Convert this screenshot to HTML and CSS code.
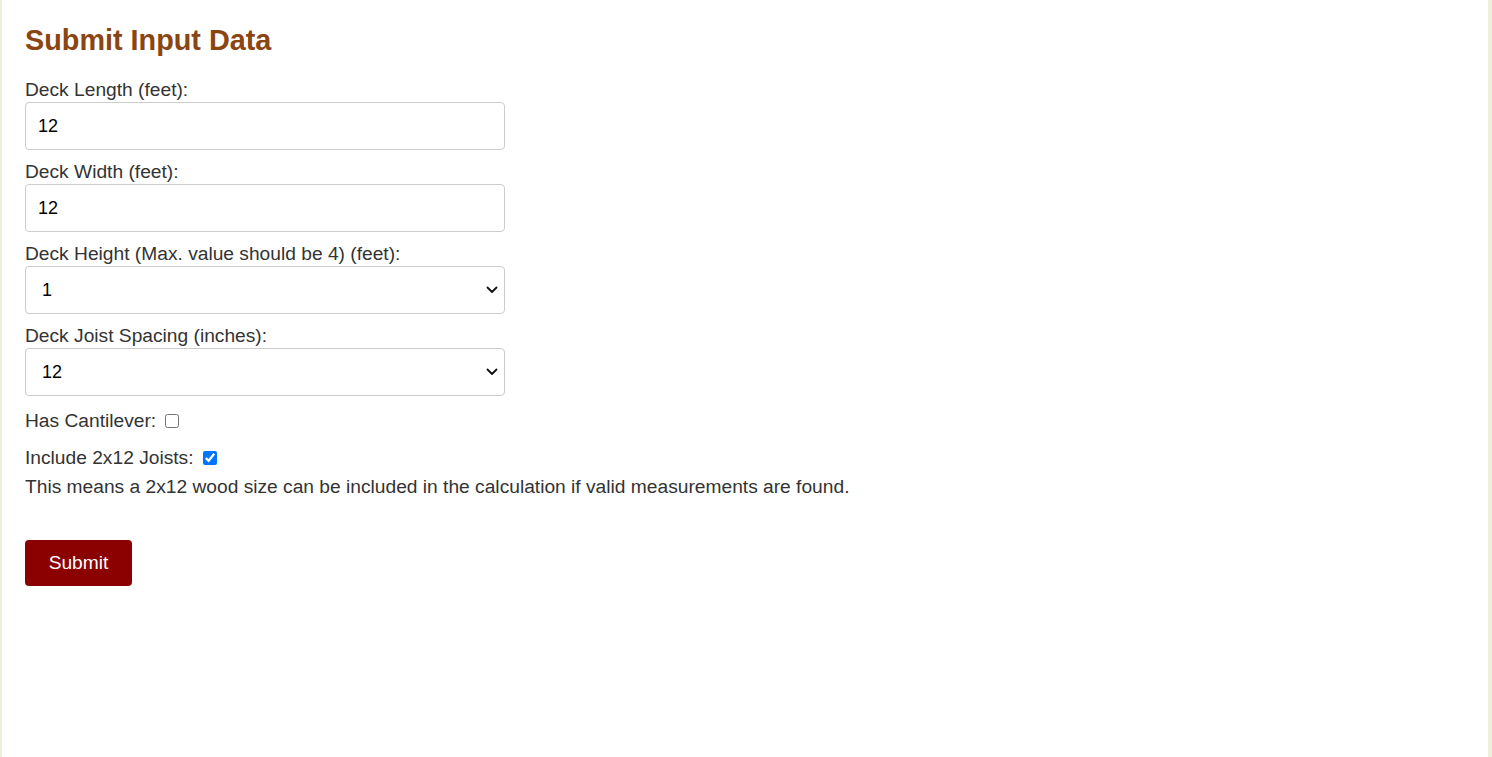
FILE: index.html
```html
<!DOCTYPE html>
<html lang="en">
<head>
  <meta charset="UTF-8" />
  <meta name="viewport" content="width=device-width, initial-scale=1.0" />
  <title>Deck Calculator</title>
  <link rel="stylesheet" href="styles.css">
</head>
<body>
  <div class="container">
    <h2>Submit Input Data</h2>

    <form id="deck-form" onsubmit="return false;">
      <div class="form-group">
        <label for="length">Deck Length (feet):</label>
        <input type="number" id="length" name="length" value="12">
      </div>

      <div class="form-group">
        <label for="width">Deck Width (feet):</label>
        <input type="number" id="width" name="width" value="12">
      </div>

      <div class="form-group">
        <label for="height">Deck Height (Max. value should be 4) (feet):</label>
        <div class="select-wrap">
          <select id="height" name="height">
            <option value="1" selected>1</option>
            <option value="2">2</option>
            <option value="3">3</option>
            <option value="4">4</option>
          </select>
          <svg class="chevron" viewBox="0 0 12 8" width="12" height="8"><path d="M1.5 1.5 L6 6 L10.5 1.5" /></svg>
        </div>
      </div>

      <div class="form-group">
        <label for="spacing">Deck Joist Spacing (inches):</label>
        <div class="select-wrap">
          <select id="spacing" name="spacing">
            <option value="12" selected>12</option>
            <option value="16">16</option>
            <option value="24">24</option>
          </select>
          <svg class="chevron" viewBox="0 0 12 8" width="12" height="8"><path d="M1.5 1.5 L6 6 L10.5 1.5" /></svg>
        </div>
      </div>

      <div class="check-row">
        <label for="cantilever">Has Cantilever:</label>
        <input type="checkbox" id="cantilever" name="cantilever">
      </div>

      <div class="check-row">
        <label for="joists">Include 2x12 Joists:</label>
        <input type="checkbox" id="joists" name="joists" checked>
      </div>
      <p class="hint">This means a 2x12 wood size can be included in the calculation if valid measurements are found.</p>

      <button type="submit" class="submit-btn">Submit</button>
    </form>
  </div>
</body>
</html>
```

FILE: styles.css
```css
/* Page frame */
html, body {
  height: 100%;
}
body {
  font-family: "Liberation Sans", Arial, sans-serif;
  font-size: 19.2px;
  background: #eef0dc;
  color: #333;
  margin: 0;
  padding: 0 4px 0 2px;
}
.container {
  background: #fff;
  min-height: 100%;
  box-sizing: border-box;
  padding: 24px 23px;
}
h2 {
  font-size: 28.8px;
  line-height: 32px;
  color: #8b4513;
  margin: 0 0 23px;
}
/* Form fields */
.form-group {
  margin-bottom: 11px;
}
.form-group label {
  display: block;
  line-height: 22px;
  margin-bottom: 1px;
}
.form-group input,
.form-group select {
  display: block;
  width: 480px;
  height: 48px;
  box-sizing: border-box;
  padding: 0 12px;
  font-family: inherit;
  font-size: 18px;
  color: #000;
  background: #fff;
  border: 1px solid #ccc;
  border-radius: 4px;
}
.form-group select {
  appearance: none;
  -webkit-appearance: none;
  padding-left: 16px;
}
/* Dropdown arrow drawn over the select */
.select-wrap {
  position: relative;
  width: 480px;
}
.chevron {
  position: absolute;
  right: 7px;
  top: 20px;
  pointer-events: none;
}
.chevron path {
  fill: none;
  stroke: #111;
  stroke-width: 1.8;
  stroke-linecap: round;
  stroke-linejoin: round;
}
/* Checkbox rows */
.check-row {
  line-height: 22px;
  display: flex;
  align-items: center;
  margin-top: 14px;
}
.check-row + .check-row {
  margin-top: 15px;
}
.check-row input {
  margin: 0 0 0 9px;
  width: 14px;
  height: 14px;
}
.hint {
  line-height: 22px;
  margin: 7px 0 42px;
}
.submit-btn {
  background: #8b0000;
  color: #fff;
  font-family: inherit;
  font-size: 19.2px;
  border: none;
  border-radius: 4px;
  width: 107px;
  height: 46px;
  cursor: pointer;
}
.submit-btn:hover {
  background: #a00000;
}
```
